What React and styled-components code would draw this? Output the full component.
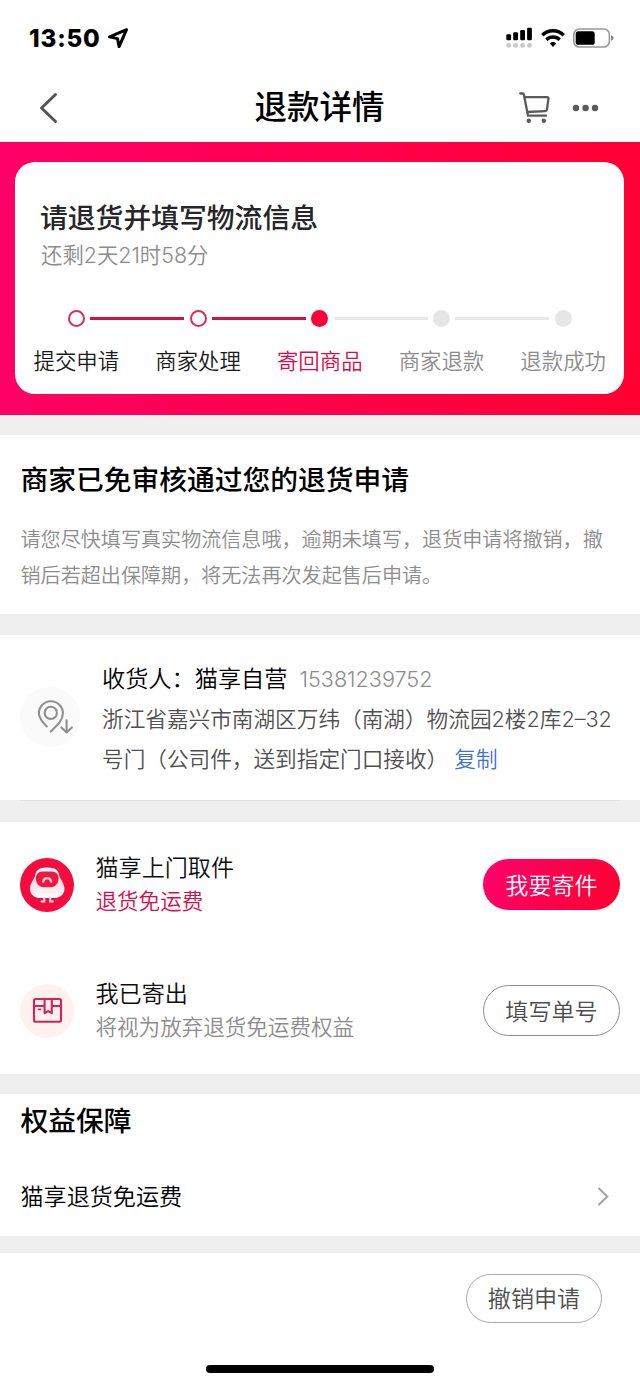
import React from 'react';
import styled, { createGlobalStyle } from 'styled-components';

const GlobalStyle = createGlobalStyle`
  * {
    box-sizing: border-box;
  }

  body {
    margin: 0;
    background: #fff;
    font-family: Inter, 'Noto Sans CJK SC', sans-serif;
    font-weight: 350;
    color: #111;
  }

  svg {
    display: block;
    flex-shrink: 0;
  }

  h1, h2, p {
    margin: 0;
  }
`;

const Page = styled.div`
  width: 640px;
  height: 1385px;
  overflow: hidden;
  background: #fff;
  display: flex;
  flex-direction: column;
`;

const StatusBar = styled.div`
  height: 72px;
  flex-shrink: 0;
  padding: 4px 26px 0 29px;
  display: flex;
  align-items: center;
  justify-content: space-between;
`;

const Clock = styled.div`
  display: flex;
  align-items: center;
  gap: 6px;
  font-size: 24.2px;
  font-weight: 800;
  letter-spacing: 0.8px;
  color: #000;
`;

const StatusIcons = styled.div`
  display: flex;
  align-items: center;
  gap: 8px;
`;

const NavBar = styled.header`
  height: 70px;
  flex-shrink: 0;
  padding: 1px 40px 0 39px;
  display: grid;
  grid-template-columns: 81px 1fr 81px;
  align-items: center;
`;

const NavTitle = styled.h1`
  font-size: 32.5px;
  line-height: 70px;
  font-weight: 500;
  text-align: center;
  color: #000;
`;

const NavActions = styled.div`
  display: flex;
  align-items: center;
  gap: 22px;
`;

const Hero = styled.div`
  height: 273px;
  flex-shrink: 0;
  padding: 20px 16px 21px 15px;
  background: linear-gradient(100deg, #ff0069 0%, #ff004d 50%, #ff0030 100%);
`;

const ProgressCard = styled.section`
  height: 232px;
  padding-top: 36px;
  border-radius: 20px;
  background: #fff;
`;

const CardTitle = styled.h2`
  padding-left: 25px;
  font-size: 27.8px;
  line-height: 40px;
  font-weight: 500;
  color: #262626;
`;

const Countdown = styled.p`
  padding-left: 26px;
  font-size: 21.4px;
  line-height: 34px;
  color: #8c8c8c;
`;

const Steps = styled.div`
  margin-top: 38px;
  padding-left: 0.5px;
  display: grid;
  grid-template-columns: repeat(5, 1fr);
`;

const Step = styled.div`
  display: flex;
  flex-direction: column;
  align-items: center;
`;

const Track = styled.div`
  width: 100%;
  display: flex;
  align-items: center;
  justify-content: space-between;
`;

const TrackLine = styled.div`
  width: 47px;
  height: ${props => props.$done ? '2.4px' : '3px'};
  background: ${props => props.$hidden ? 'transparent' : props.$done ? '#cb1546' : '#e8e8e8'};
`;

const Dot = styled.div`
  width: 17px;
  height: 17px;
  border-radius: 50%;
  background: ${props => ({ done: '#fff', current: '#f8033a', next: '#e6e6e6' })[props.$state]};
  border: ${props => props.$state === 'done' ? '2px solid #d6305a' : 'none'};
`;

const StepLabel = styled.div`
  margin-top: 17px;
  font-size: 21.4px;
  line-height: 34px;
  white-space: nowrap;
  color: ${props => ({ done: '#1a1a1a', current: '#d90b4c', next: '#8c8c8c' })[props.$state]};
`;

const Divider = styled.div`
  height: ${props => props.$size}px;
  flex-shrink: 0;
  background: #efefef;
`;

const Hairline = styled.div`
  height: 1px;
  margin: 0 20px;
  background: #e1e1e1;
`;

const Notice = styled.section`
  height: 179px;
  flex-shrink: 0;
  padding: 25px 20px 0 20.5px;
`;

const SectionTitle = styled.h2`
  font-size: 27.75px;
  line-height: 40px;
  font-weight: 500;
  color: #000;
`;

const NoticeText = styled.p`
  margin-top: 23px;
  font-size: 20.08px;
  line-height: 35.5px;
  white-space: nowrap;
  color: #8c8c8c;
`;

const Address = styled.section`
  height: 165px;
  flex-shrink: 0;
  padding: 24px 20px 0 20px;
  display: flex;
  gap: 22px;

  > svg {
    margin-top: 28px;
  }
`;

const AddressBody = styled.div`
  font-size: 21.65px;
  line-height: 40px;
  white-space: nowrap;
  color: #505050;
`;

const Receiver = styled.div`
  display: flex;
  gap: 12px;
  font-size: 23.2px;
  color: #000;
`;

const Phone = styled.span`
  font-size: 21.6px;
  color: #8c8c8c;
`;

const CopyLink = styled.a`
  margin-left: 6px;
  color: #3f72d4;
`;

const Options = styled.section`
  height: 252px;
  flex-shrink: 0;
`;

const Option = styled.div`
  height: 126px;
  padding: 0 20px;
  display: flex;
  align-items: center;
`;

const OptionText = styled.div`
  flex: 1;
  padding-left: 21.5px;
  white-space: nowrap;
`;

const OptionTitle = styled.div`
  font-size: 23.1px;
  line-height: 33px;
  color: #0d0d0d;
`;

const OptionHint = styled.div`
  font-size: 21.55px;
  line-height: 33px;
  color: ${props => props.$accent ? '#d90b4c' : '#8c8c8c'};
`;

const PillButton = styled.button`
  width: ${props => props.$small ? 136 : 137}px;
  height: ${props => props.$small ? 49 : 51}px;
  margin-bottom: ${props => props.$small ? 0 : 1}px;
  padding: ${props => props.$small ? 0 : '2px 0 0'};
  border: ${props => props.$primary ? 'none' : `1.5px solid ${props.$small ? '#aaa' : '#8c8c8c'}`};
  border-radius: 26px;
  background: ${props => props.$primary ? 'linear-gradient(110deg, #ff006c, #ff0030)' : '#fff'};
  color: ${props => props.$primary ? '#fff' : '#4d4d4d'};
  font: inherit;
  font-size: 23.1px;
  line-height: 46px;
`;

const Benefits = styled.section`
  height: 142px;
  flex-shrink: 0;
  padding: 7px 31px 0 20.5px;
`;

const BenefitRow = styled.div`
  margin-top: 36px;
  display: flex;
  align-items: center;
  justify-content: space-between;
  font-size: 23.1px;
  line-height: 40px;
  color: #000;
`;

const Footer = styled.footer`
  flex: 1;
  padding: 21px 38px 12px;
  display: flex;
  flex-direction: column;
  justify-content: space-between;
  align-items: flex-end;
`;

const HomeIndicator = styled.div`
  width: 228px;
  height: 8px;
  border-radius: 4px;
  background: #000;
  align-self: center;
`;

const LocationIcon = () => (
  <svg width="22" height="22" viewBox="0 0 22 22" fill="none">
    <path d="M19.5 2.7 2.5 9.9l8 1.7 1.6 8Z" stroke="#000" strokeWidth="3" strokeLinejoin="round" />
  </svg>
);

const SignalIcon = () => (
  <svg width="27" height="22" viewBox="0 0 27 22">
    <g fill="#000">
      <rect x="0.3" y="7.2" width="4.8" height="6" rx="1.2" />
      <rect x="7.2" y="5.2" width="4.8" height="8" rx="1.2" />
      <rect x="14.2" y="3" width="4.8" height="10.2" rx="1.2" />
      <rect x="21.1" y="0.8" width="4.8" height="12.4" rx="1.2" />
    </g>
    <g fill="#c8c8c8">
      <circle cx="2.7" cy="18.4" r="2.4" />
      <circle cx="9.6" cy="18.4" r="2.4" />
      <circle cx="16.6" cy="18.4" r="2.4" />
      <circle cx="23.5" cy="18.4" r="2.4" />
    </g>
  </svg>
);

const WifiIcon = () => (
  <svg width="24" height="20" viewBox="0 0 24 20" fill="none">
    <path d="M1.3 7.2a15.2 15.2 0 0 1 21.4 0" stroke="#000" strokeWidth="3.5" />
    <path d="M5.3 11.7a9.6 9.6 0 0 1 13.4 0" stroke="#000" strokeWidth="3.3" />
    <path d="M8.8 15.6a4.7 4.7 0 0 1 6.4 0L12 18.9Z" fill="#000" />
  </svg>
);

const BatteryIcon = () => (
  <svg width="41" height="20" viewBox="0 0 41 20" fill="none">
    <rect x="0.8" y="1" width="35.6" height="18" rx="5.6" stroke="#999" strokeWidth="1.6" />
    <rect x="2.7" y="3.2" width="19" height="13.6" rx="2.6" fill="#000" />
    <path d="M38 7.2c1.6.5 2.6 1.5 2.6 2.8s-1 2.3-2.6 2.8Z" fill="#8a8a8a" />
  </svg>
);

const BackIcon = () => (
  <svg width="20" height="32" viewBox="0 0 20 32" fill="none">
    <path d="M16.5 2.5 2.5 16 16.5 29.5" stroke="#555" strokeWidth="3" strokeLinecap="round" strokeLinejoin="round" />
  </svg>
);

const CartIcon = () => (
  <svg width="31" height="32" viewBox="0 0 31 32" fill="none">
    <g stroke="#5a5a5a" strokeWidth="2.3" strokeLinecap="round" strokeLinejoin="round">
      <path d="M1.3 1.5h2.5q.9 0 1.1 1l4.1 21.2H27" />
      <path d="M5.5 5.2H28q1.6 0 1.4 1.6l-1.5 10.8q-.2 1.4-1.6 1.5L8.2 20" />
    </g>
    <circle cx="9.8" cy="28.7" r="2.2" fill="#5a5a5a" />
    <circle cx="24.8" cy="28.7" r="2.2" fill="#5a5a5a" />
  </svg>
);

const MoreIcon = () => (
  <svg width="27" height="8" viewBox="0 0 27 8" fill="#5a5a5a">
    <circle cx="4" cy="4" r="3.2" />
    <circle cx="13.6" cy="4" r="3.2" />
    <circle cx="23" cy="4" r="3.2" />
  </svg>
);

const PinIcon = () => (
  <svg width="60" height="60" viewBox="0 0 60 60" fill="none">
    <circle cx="30" cy="30" r="30" fill="#fafafa" />
    <g stroke="#8f8f8f" strokeWidth="2.1" strokeLinecap="round" strokeLinejoin="round">
      <path d="M26.8 39.5C22.5 35.3 18.9 31 18.9 26.2a12 12 0 0 1 24 0c0 7.2-5.6 12.2-12.2 18.4" />
      <circle cx="30.8" cy="25.9" r="6.1" />
      <path d="M46.6 33.2v12.4M41.4 40.4l5.2 5.2 5.2-5.2" />
    </g>
  </svg>
);

const MascotIcon = () => (
  <svg width="54" height="54" viewBox="0 0 54 54" fill="none">
    <defs>
      <linearGradient id="mascot" x1="0" y1="0" x2="0" y2="1">
        <stop offset="0" stopColor="#fff" />
        <stop offset="0.45" stopColor="#ffd9df" />
        <stop offset="1" stopColor="#fff" />
      </linearGradient>
    </defs>
    <circle cx="27" cy="27" r="27" fill="#f50c3f" />
    <path
      d="M20 10.4q7.2-2 14.4 0c3 1.2 4.6 4 5.2 8.3 2.2 3.8 4.9 8.300 4.900 12 0 6.200-5.300 9.300-10.300 9.300h-14c-5 0-10.300-3.100-10.300-9.300 0-3.700 2.700-8.200 4.900-12 .6-4.300 2.200-7.100 5.200-8.300Z"
      fill="url(#mascot)"
    />
    <path
      d="M22.500 13.400h9.400c4.200 0 6.600 2.900 6.600 7.100 0 4.900-3.400 8.700-7.600 8.700h-7.400c-4.200 0-7.600-3.800-7.600-8.700 0-4.200 2.400-7.100 6.600-7.100Z"
      fill="#ee1743"
    />
    <path d="M23.200 23.600c.7-4.700 7.300-4.700 8 0" stroke="#ffc6d0" strokeWidth="2.300" strokeLinecap="round" />
    <path d="M24.300 39.500v4h-2.800M30.200 39.500v4H33" stroke="#ffe1e6" strokeWidth="2" strokeLinecap="round" />
  </svg>
);

const ParcelIcon = () => (
  <svg width="54" height="54" viewBox="0 0 54 54" fill="none">
    <circle cx="27" cy="27" r="27" fill="#fff1f0" />
    <g stroke="#d62355" strokeWidth="2.1" strokeLinejoin="round">
      <rect x="14" y="15" width="27" height="22.8" rx="1.8" />
      <path d="M14 22h10.6M31.8 22H41M24.6 15v14.2l3.6-2.1 3.6 2.1V15" />
      <path d="M17.8 25.4h3.4" strokeWidth="1.6" />
    </g>
  </svg>
);

const ChevronIcon = () => (
  <svg width="12" height="20" viewBox="0 0 12 20" fill="none">
    <path d="M2 1.500 10.300 9.500 2 17.500" stroke="#a3a3a3" strokeWidth="2" strokeLinecap="round" />
  </svg>
);

const steps = [
  { label: '提交申请', state: 'done' },
  { label: '商家处理', state: 'done' },
  { label: '寄回商品', state: 'current' },
  { label: '商家退款', state: 'next' },
  { label: '退款成功', state: 'next' },
];

function App() {
  return (
    <Page>
      <GlobalStyle />
      <StatusBar>
        <Clock>
          13:50
          <LocationIcon />
        </Clock>
        <StatusIcons>
          <SignalIcon />
          <WifiIcon />
          <BatteryIcon />
        </StatusIcons>
      </StatusBar>

      <NavBar>
        <BackIcon />
        <NavTitle>退款详情</NavTitle>
        <NavActions>
          <CartIcon />
          <MoreIcon />
        </NavActions>
      </NavBar>

      <Hero>
        <ProgressCard>
          <CardTitle>请退货并填写物流信息</CardTitle>
          <Countdown>还剩2天21时58分</Countdown>
          <Steps>
            {steps.map((step, i) => (
              <Step key={step.label}>
                <Track>
                  <TrackLine $hidden={i === 0} $done={step.state !== 'next'} />
                  <Dot $state={step.state} />
                  <TrackLine $hidden={i === steps.length - 1} $done={step.state === 'done'} />
                </Track>
                <StepLabel $state={step.state}>{step.label}</StepLabel>
              </Step>
            ))}
          </Steps>
        </ProgressCard>
      </Hero>

      <Divider $size={20} />

      <Notice>
        <SectionTitle>商家已免审核通过您的退货申请</SectionTitle>
        <NoticeText>
          请您尽快填写真实物流信息哦，逾期未填写，退货申请将撤销，撤
          <br />
          销后若超出保障期，将无法再次发起售后申请。
        </NoticeText>
      </Notice>

      <Divider $size={21} />

      <Address>
        <PinIcon />
        <AddressBody>
          <Receiver>
            收货人：猫享自营
            <Phone>15381239752</Phone>
          </Receiver>
          浙江省嘉兴市南湖区万纬（南湖）物流园2楼2库2–32
          <br />
          号门（公司件，送到指定门口接收）
          <CopyLink>复制</CopyLink>
        </AddressBody>
      </Address>

      <Divider $size={22}>
        <Hairline />
      </Divider>

      <Options>
        <Option>
          <MascotIcon />
          <OptionText>
            <OptionTitle>猫享上门取件</OptionTitle>
            <OptionHint $accent>退货免运费</OptionHint>
          </OptionText>
          <PillButton $primary>我要寄件</PillButton>
        </Option>
        <Option>
          <ParcelIcon />
          <OptionText>
            <OptionTitle>我已寄出</OptionTitle>
            <OptionHint>将视为放弃退货免运费权益</OptionHint>
          </OptionText>
          <PillButton>填写单号</PillButton>
        </Option>
      </Options>

      <Divider $size={20} />

      <Benefits>
        <SectionTitle>权益保障</SectionTitle>
        <BenefitRow>
          猫享退货免运费
          <ChevronIcon />
        </BenefitRow>
      </Benefits>

      <Divider $size={17} />

      <Footer>
        <PillButton $small>撤销申请</PillButton>
        <HomeIndicator />
      </Footer>
    </Page>
  );
}

export default App;
